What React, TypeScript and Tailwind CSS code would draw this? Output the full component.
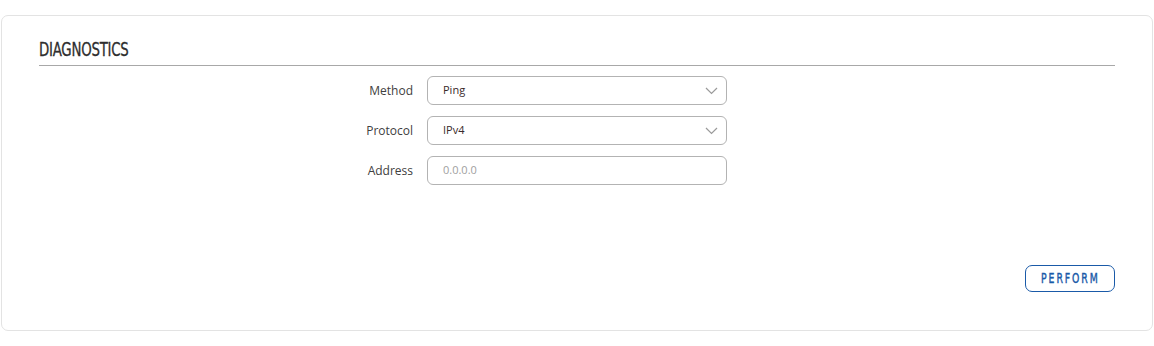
import { FunctionComponent } from "react";

const Chevron: FunctionComponent = () => (
  <svg width="13" height="8" viewBox="0 0 13 8" fill="none" className="absolute right-[8px] top-[10px]">
    <path d="M1 1l5.5 5.5L12 1" stroke="#9a9a9a" strokeWidth="1.2" />
  </svg>
);

const Row: FunctionComponent<{ label: string; children: React.ReactNode }> = ({ label, children }) => (
  <div className="flex items-center h-[29px]">
    <label className="w-[388px] pr-[14px] text-right text-[12px] text-[#404040]">{label}</label>
    {children}
  </div>
);

const App: FunctionComponent = () => {
  return (
    <div className="bg-white w-[1154px] h-[346px] pt-[15px] px-px font-['Open_Sans','Noto_Sans',sans-serif]">
      <div className="h-[316px] border border-[#e3e3e3] rounded-[7px] px-[37px] pt-[20px] pb-[38px] flex flex-col">
        <h2 className="font-['DejaVu_Sans_Condensed',sans-serif] text-[19px] leading-[27px] text-[#2e2e2e] [-webkit-text-stroke:0.3px_#2e2e2e] tracking-[-0.3px] origin-left scale-x-[0.78] h-[27px]">
          DIAGNOSTICS
        </h2>
        <div className="border-b border-[#a8a8a8] mt-[2px]" />
        <div className="flex flex-col gap-[11px] mt-[10px]">
          <Row label="Method">
            <div className="relative w-[300px] h-[29px] border border-[#b3b3b3] rounded-[6px] flex items-center pl-[15px] text-[11px] text-[#3a2a2a]">
              Ping
              <Chevron />
            </div>
          </Row>
          <Row label="Protocol">
            <div className="relative w-[300px] h-[29px] border border-[#b3b3b3] rounded-[6px] flex items-center pl-[15px] text-[11px] text-[#3a2a2a]">
              IPv4
              <Chevron />
            </div>
          </Row>
          <Row label="Address">
            <div className="w-[300px] h-[29px] border border-[#b3b3b3] rounded-[6px] flex items-center pl-[15px] text-[11px] text-[#a0a0a0]">
              0.0.0.0
            </div>
          </Row>
        </div>
        <div className="mt-auto flex justify-end">
          <button className="w-[90px] h-[27px] border border-[#1a5aa8] rounded-[7px] text-[#1a5aa8] flex items-center justify-center">
            <span className="font-['DejaVu_Sans_Condensed',sans-serif] text-[14px] [-webkit-text-stroke:0.4px_#1a5aa8] tracking-[2.6px] scale-x-[0.74] pl-[2px]">
              PERFORM
            </span>
          </button>
        </div>
      </div>
    </div>
  );
};

export default App;
